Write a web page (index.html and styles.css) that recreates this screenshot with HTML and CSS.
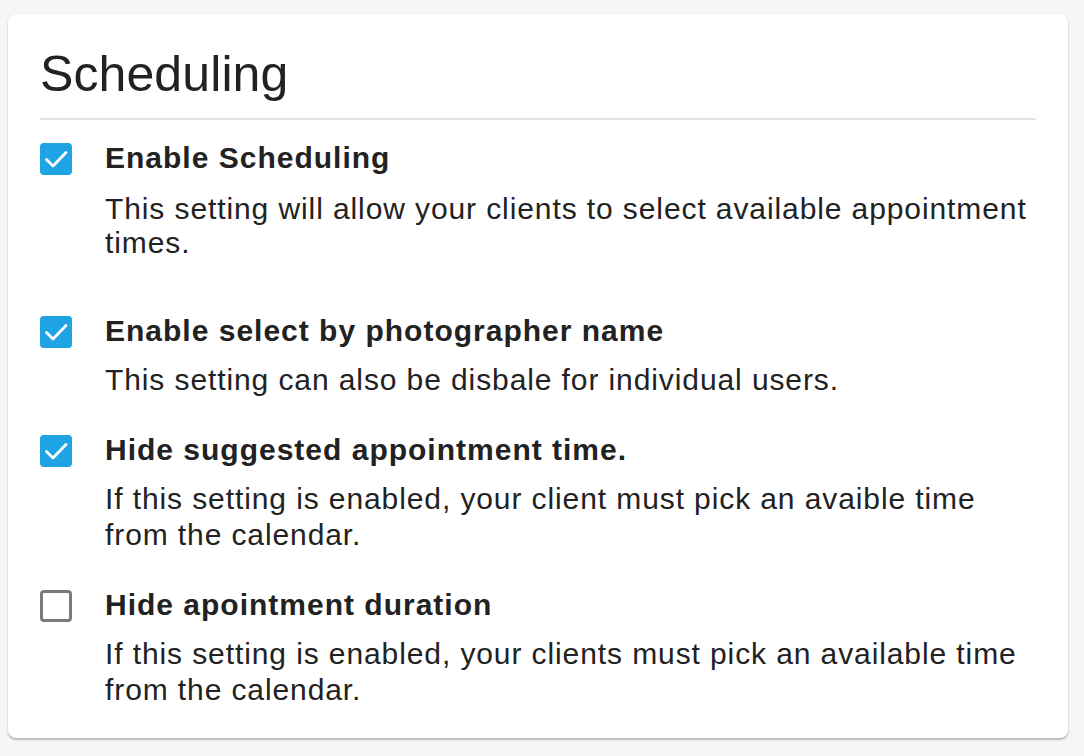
FILE: index.html
```html
<!DOCTYPE html>
<html>
<head>
<meta charset="utf-8">
<link rel="stylesheet" href="styles.css">
</head>
<body>
<div class="card">
  <h1 class="title">Scheduling</h1>
  <div class="divider"></div>
  <div class="option first">
    <span class="box checked"><svg viewBox="0 0 32 32" width="32" height="32"><path d="M6.5 16.5l6.5 6.5L26 9.5" fill="none" stroke="#fff" stroke-width="2.8" stroke-linecap="round" stroke-linejoin="round"/></svg></span>
    <div class="text">
      <div class="label">Enable Scheduling</div>
      <div class="desc">This setting will allow your clients to select available appointment times.</div>
    </div>
  </div>
  <div class="option">
    <span class="box checked"><svg viewBox="0 0 32 32" width="32" height="32"><path d="M6.5 16.5l6.5 6.5L26 9.5" fill="none" stroke="#fff" stroke-width="2.8" stroke-linecap="round" stroke-linejoin="round"/></svg></span>
    <div class="text">
      <div class="label">Enable select by photographer name</div>
      <div class="desc">This setting can also be disbale for individual users.</div>
    </div>
  </div>
  <div class="option">
    <span class="box checked"><svg viewBox="0 0 32 32" width="32" height="32"><path d="M6.5 16.5l6.5 6.5L26 9.5" fill="none" stroke="#fff" stroke-width="2.8" stroke-linecap="round" stroke-linejoin="round"/></svg></span>
    <div class="text">
      <div class="label">Hide suggested appointment time.</div>
      <div class="desc">If this setting is enabled, your client must pick an avaible time from the calendar.</div>
    </div>
  </div>
  <div class="option">
    <span class="box"></span>
    <div class="text">
      <div class="label">Hide apointment duration</div>
      <div class="desc">If this setting is enabled, your clients must pick an available time from the calendar.</div>
    </div>
  </div>
</div>
</body>
</html>
```
FILE: styles.css
```css
html, body {
  margin: 0;
  padding: 0;
  background: #f6f6f6;
}
body {
  padding: 14px 16px 18px 8px;
  font-family: "Liberation Sans", Arial, sans-serif;
  color: #222;
}
.card {
  background: #fff;
  border-radius: 8px;
  box-shadow: 0 2px 2px rgba(0,0,0,0.25), 0 0 1px rgba(0,0,0,0.08);
  padding: 28px 32px 30px 32px;
}
.title {
  margin: 0;
  font-size: 50px;
  font-weight: 400;
  line-height: 64px;
  letter-spacing: 0.1px;
}
.divider {
  height: 2px;
  background: #e2e2e2;
  margin: 12px 0 22px;
}
.option {
  display: flex;
  align-items: flex-start;
  margin-top: 36px;
}
.option.first {
  margin-top: 0;
  margin-bottom: 55px;
}
.box {
  flex: none;
  width: 32px;
  height: 32px;
  box-sizing: border-box;
  border-radius: 4px;
  border: 3px solid #7a7a7a;
  margin-top: 1px;
  margin-right: 33px;
  background: #fff;
}
.box.checked {
  border: none;
  background: #1ea3e4;
}
.box svg {
  display: block;
}
.label {
  font-size: 30px;
  font-weight: 700;
  line-height: 32px;
  letter-spacing: 1px;
}
.desc {
  font-size: 30px;
  line-height: 36px;
  margin-top: 15px;
  letter-spacing: 0.9px;
}
.first .desc {
  margin-top: 18px;
  line-height: 34px;
}
```
